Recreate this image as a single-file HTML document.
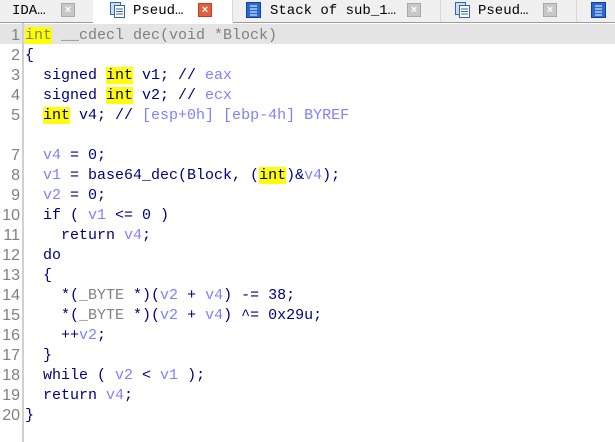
<!DOCTYPE html>
<html><head><style>
*{margin:0;padding:0;box-sizing:border-box}
body{width:615px;height:442px;overflow:hidden;background:#fff;position:relative;font-family:"Liberation Mono",monospace}
.bar{position:absolute;left:0;top:0;width:615px;height:23px;background:#f0f0f0;border-bottom:1px solid #9a9a9a}
.tab{position:absolute;top:0;height:22px;font:14px "Liberation Mono",monospace;line-height:22px;color:#000}
.sep{position:absolute;top:0;width:1px;height:22px;background:#d8d8d8}
.x{position:absolute;top:3px;width:14px;height:14px;background:#c8c8c8;border:1px solid #a8a8a8;color:#fff;font:bold 11px "Liberation Sans",sans-serif;text-align:center;line-height:12px}
.x.r{background:#e06040;border-color:#c04020}
.ic{position:absolute;top:2px;width:15px;height:16px}
.hl{position:absolute;left:0;top:24px;width:615px;height:20px;background:#e4e4e4}
.gut{position:absolute;left:22px;top:23px;width:2px;height:419px;background:#d0d0d0}
.code{position:absolute;left:25px;top:26px;font:15px/20px "Liberation Mono",monospace;color:#000080;white-space:pre}
.v{color:#8080ff}.g{color:#808080}.y{background:#ffff00}.c{color:#8080ff}
</style></head><body>
<div class="bar"></div>
<div class="tab" style="left:93px;width:140px;height:24px;background:#fff"></div>
<div class="tab" style="left:12px">IDA…</div><div class="x" style="left:61px">×</div>
<svg class="ic" style="left:110px" viewBox="0 0 15 16"><rect x="0.5" y="0.5" width="10" height="12" fill="#cde" stroke="#36a"/><rect x="4.5" y="3.5" width="10" height="12" fill="#fff" stroke="#36a"/><path d="M6 7h7M6 9.5h7M6 12h7" stroke="#36a"/></svg>
<div class="tab" style="left:133px">Pseud…</div><div class="x r" style="left:198px">×</div>
<div class="sep" style="left:232px"></div>
<svg class="ic" style="left:246px" viewBox="0 0 15 16"><rect x="0.5" y="0.5" width="14" height="15" fill="#2a6ad0" stroke="#1040a0"/><path d="M4 4h7M4 7h7M4 10h7M4 13h7" stroke="#fff"/></svg>
<div class="tab" style="left:270px">Stack of sub_1…</div><div class="x" style="left:407px">×</div>
<div class="sep" style="left:440px"></div>
<svg class="ic" style="left:455px" viewBox="0 0 15 16"><rect x="0.5" y="0.5" width="10" height="12" fill="#cde" stroke="#36a"/><rect x="4.5" y="3.5" width="10" height="12" fill="#fff" stroke="#36a"/><path d="M6 7h7M6 9.5h7M6 12h7" stroke="#36a"/></svg>
<div class="tab" style="left:478px">Pseud…</div><div class="x" style="left:543px">×</div>
<div class="sep" style="left:576px"></div>
<svg class="ic" style="left:591px" viewBox="0 0 15 16"><rect x="0.5" y="0.5" width="14" height="15" fill="#2a6ad0" stroke="#1040a0"/><path d="M4 4h7M4 7h7M4 10h7M4 13h7" stroke="#fff"/></svg>
<div class="hl"></div>
<div class="gut"></div>
<div style="position:absolute;left:0;top:26px;font:16px/20px 'Liberation Sans',sans-serif;color:#808080;width:20px;text-align:right;white-space:pre">1
2
3
4
5

7
8
9
10
11
12
13
14
15
16
17
18
19
20</div>
<div class="code"><span class="g"><span class="y">int</span> __cdecl dec(void *Block)</span>
{
  signed <span class="y">int</span> v1; // <span class="c">eax</span>
  signed <span class="y">int</span> v2; // <span class="c">ecx</span>
  <span class="y">int</span> v4; // <span class="c">[esp+0h] [ebp-4h] BYREF</span>

  <span class="v">v4</span> = 0;
  <span class="v">v1</span> = base64_dec(Block, (<span class="y">int</span>)&amp;<span class="v">v4</span>);
  <span class="v">v2</span> = 0;
  if ( <span class="v">v1</span> &lt;= 0 )
    return <span class="v">v4</span>;
  do
  {
    *(<span class="g">_BYTE</span> *)(<span class="v">v2</span> + <span class="v">v4</span>) -= 38;
    *(<span class="g">_BYTE</span> *)(<span class="v">v2</span> + <span class="v">v4</span>) ^= 0x29u;
    ++<span class="v">v2</span>;
  }
  while ( <span class="v">v2</span> &lt; <span class="v">v1</span> );
  return <span class="v">v4</span>;
}</div>
</body></html>
